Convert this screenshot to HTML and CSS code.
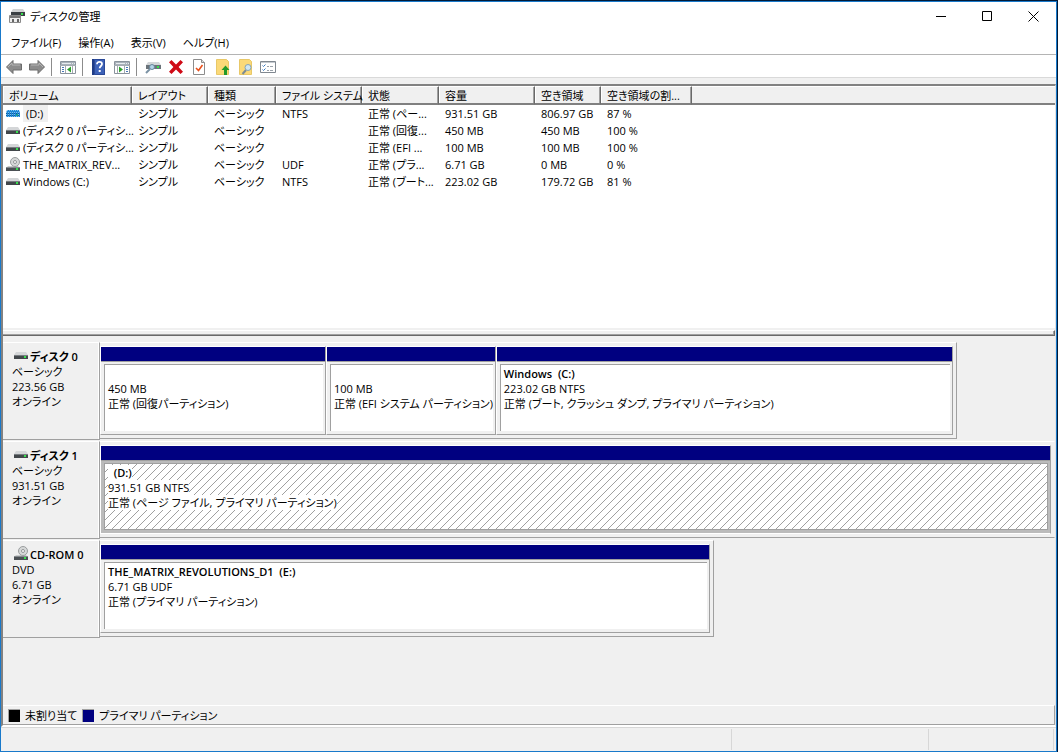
FILE: index.html
```html
<!DOCTYPE html>
<html lang="ja">
<head>
    <meta charset="UTF-8">
    <meta name="viewport" content="width=device-width, initial-scale=1.0">
    <title>ディスクの管理</title>
    <link rel="stylesheet" href="styles.css">
</head>
<body>
    <!-- Общие иконки дисков -->
    <svg class="sprite" aria-hidden="true">
        <symbol id="drive" viewBox="0 0 14 16">
            <path d="M2 4h10l2 3H0z" fill="#d4d6d8"/>
            <rect y="7" width="14" height="4" fill="#42474b"/>
            <rect y="7" width="14" height="1" fill="#777c80"/>
            <rect x="10" y="8" width="2" height="2" fill="#35e04c"/>
        </symbol>
        <symbol id="drive-selected" viewBox="0 0 14 16">
            <path d="M1 4h12l1 3v4H0V7z" fill="#1c86d6"/>
            <path d="M1 4.500h12M0 6.500h14M0 8.500h14M0 10.500h14" stroke="#7cc0f0" stroke-dasharray="1 1"/>
            <path d="M0 7.500h14M0 9.500h14" stroke="#0b5a9c" stroke-dasharray="1 1"/>
            <rect x="10" y="8" width="2" height="2" fill="#15a08c"/>
        </symbol>
        <symbol id="cdrom" viewBox="0 0 14 16">
            <path d="M2 9h10l2 2H0z" fill="#c9cbcc"/>
            <circle cx="9" cy="5" r="4.500" fill="#d6d8d8" stroke="#9a9d9e"/>
            <circle cx="9" cy="5" r="1.500" fill="#fff" stroke="#929596"/>
            <rect y="10" width="14" height="4" fill="#4b5054"/>
            <rect y="10" width="14" height="1" fill="#868b8e"/>
            <rect x="10" y="11" width="2" height="2" fill="#35e04c"/>
        </symbol>
    </svg>

    <div class="window">
        <header class="titlebar">
            <svg class="app-icon" width="16" height="16" viewBox="0 0 16 16">
                <path d="M4 1h10l2 3H2z" fill="#d0d2d3"/>
                <rect x="2" y="4" width="14" height="4" fill="#3b4044"/>
                <rect x="12" y="5" width="2" height="2" fill="#35e04c"/>
                <path d="M.500 7.500h11v7H.500z" fill="#eee" stroke="#8a8a8a"/>
                <path d="M1 8h10v2H1z" fill="#777"/>
                <path d="M3 11h2v3H3zM8 11h2v3H8z" fill="#666"/>
            </svg>
            <h1>ディスクの管理</h1>
            <div class="window-buttons">
                <button type="button" aria-label="最小化"><svg width="11" height="11" viewBox="0 0 11 11"><path d="M0 5.500h10" stroke="#000"/></svg></button>
                <button type="button" aria-label="最大化"><svg width="11" height="11" viewBox="0 0 11 11"><path d="M.500.500h9v9h-9z" fill="none" stroke="#000"/></svg></button>
                <button type="button" aria-label="閉じる"><svg width="11" height="11" viewBox="0 0 11 11"><path d="M.500.500l10 10M10.500.500l-10 10" stroke="#000"/></svg></button>
            </div>
        </header>

        <nav class="menubar">
            <button type="button">ファイル(F)</button>
            <button type="button">操作(A)</button>
            <button type="button">表示(V)</button>
            <button type="button">ヘルプ(H)</button>
        </nav>

        <div class="toolbar">
            <button type="button" aria-label="戻る">
                <svg width="16" height="16" viewBox="0 0 16 16"><path d="M.500 8L7 1.500V5h8.500v6H7v3.500z" fill="#8c8c8c" stroke="#6c6c6c"/><path d="M2 8l4-4v2h8" fill="none" stroke="#b5b5b5"/></svg>
            </button>
            <button type="button" aria-label="進む">
                <svg width="16" height="16" viewBox="0 0 16 16"><path d="M15.500 8L9 1.500V5H.500v6H9v3.500z" fill="#8c8c8c" stroke="#6c6c6c"/><path d="M14 8l-4-4v2H2" fill="none" stroke="#b5b5b5"/></svg>
            </button>
            <span class="separator"></span>
            <button type="button" aria-label="コンソール ツリー">
                <svg width="16" height="16" viewBox="0 0 16 16"><path d="M.500 2.500h15v12H.500z" fill="#fff" stroke="#8a939c"/><path d="M1 3h14v3H1z" fill="#aab2bb"/><path d="M2 4.500h9M12 4.500h1M14 4.500h1" stroke="#e8ecef"/><path d="M0 6.500h16M5.500 7v7M12.500 7v7" stroke="#a4abb2"/><path d="M2 8.500h2M2 10.500h2M2 12.500h2" stroke="#4878b8"/><path d="M11 7.500v6L7 10.500z" fill="#2ca02c"/></svg>
            </button>
            <span class="separator"></span>
            <button type="button" aria-label="ヘルプ">
                <svg width="16" height="16" viewBox="0 0 16 16"><path d="M1 0h13v16H1z" fill="#3d62b8"/><path d="M1 0h2v16H1z" fill="#1f3c86"/><path d="M3.500.500h10v15h-10z" fill="none" stroke="#2a4896"/><path d="M6 5.200C6 3.500 7.200 2.800 8.500 2.800S11 3.600 11 5c0 2-2.300 2-2.300 4.300" fill="none" stroke="#fff" stroke-width="1.800"/><path d="M7.700 11h2v2h-2z" fill="#fff"/></svg>
            </button>
            <button type="button" aria-label="操作ウィンドウ">
                <svg width="16" height="16" viewBox="0 0 16 16"><path d="M.500 2.500h15v12H.500z" fill="#fff" stroke="#8a939c"/><path d="M1 3h14v3H1z" fill="#aab2bb"/><path d="M2 4.500h9M12 4.500h1M14 4.500h1" stroke="#e8ecef"/><path d="M0 6.500h16M3.500 7v7M10.500 7v7" stroke="#a4abb2"/><path d="M12 8.500h2M12 10.500h2M12 12.500h2" stroke="#4878b8"/><path d="M5 7.500v6l4-3z" fill="#2ca02c"/></svg>
            </button>
            <span class="separator"></span>
            <button type="button" aria-label="ディスクの再スキャン">
                <svg width="16" height="16" viewBox="0 0 16 16"><path d="M3 3h11l2 3H1z" fill="#d3d6d8"/><path d="M1 6h15v4H1z" fill="#6b7379"/><path d="M12 7h2v2h-2z" fill="#35e04c"/><path d="M5 10l-4 4" stroke="#7b92a4" stroke-width="2"/><circle cx="7" cy="8" r="2.500" fill="#b4d4e8" stroke="#68889c"/></svg>
            </button>
            <button type="button" aria-label="削除">
                <svg width="16" height="16" viewBox="0 0 16 16"><path d="M3.500 1L8 5.500 12.500 1 15 3.300 10.600 8l4.400 4.700-2.500 2.300L8 10.500 3.500 15 1 12.700 5.400 8 1 3.300z" fill="#cf0a16"/></svg>
            </button>
            <button type="button" aria-label="プロパティ">
                <svg width="16" height="16" viewBox="0 0 16 16"><path d="M2.500.500h8l3 3v12h-11z" fill="#fff" stroke="#8c8c8c"/><path d="M10.500.500v3h3" fill="#ddd" stroke="#8c8c8c"/><path d="M5 9l2.500 2.500L11.500 6" fill="none" stroke="#e8501c" stroke-width="1.600"/></svg>
            </button>
            <button type="button" aria-label="上へ">
                <svg width="16" height="16" viewBox="0 0 16 16"><path d="M2.500.500h10l2 2v13h-12z" fill="#fbd978" stroke="#e8c868"/><path d="M11.500 6.500l4 4.500h-2.500v5h-3v-5H7.500z" fill="#239a2a"/></svg>
            </button>
            <button type="button" aria-label="検索">
                <svg width="16" height="16" viewBox="0 0 16 16"><path d="M2.500.500h10l2 2v13h-12z" fill="#fbd978" stroke="#e8c868"/><path d="M9 11l-3.500 4" stroke="#7d8c94" stroke-width="2"/><circle cx="11" cy="8.500" r="3" fill="#cfe6f4" stroke="#86a4b4"/></svg>
            </button>
            <button type="button" aria-label="一覧">
                <svg width="16" height="16" viewBox="0 0 16 16"><path d="M.500 2.500h15v11H.500z" fill="#fff" stroke="#808890"/><path d="M1 3.500h14" stroke="#c5cad0"/><path d="M2.500 6.500l1 1 2-2M2.500 10.500l1 1 2-2" fill="none" stroke="#3878c0"/><path d="M7 7.500h2M10 7.500h3M7 11.500h2M10 11.500h3" stroke="#9aa2aa"/></svg>
            </button>
        </div>

        <main class="content">
            <div class="volumes">
                <table class="volume-table">
                    <colgroup>
                        <col class="col-volume"><col class="col-layout"><col class="col-type"><col class="col-fs"><col class="col-status"><col class="col-size"><col class="col-free"><col class="col-percent"><col>
                    </colgroup>
                    <thead>
                        <tr><th>ボリューム</th><th>レイアウト</th><th>種類</th><th>ファイル システム</th><th>状態</th><th>容量</th><th>空き領域</th><th>空き領域の割...</th><td></td></tr>
                    </thead>
                    <tbody>
                        <tr><td><svg class="icon"><use href="#drive-selected"/></svg><span class="selected">(D:)</span></td><td>シンプル</td><td>ベーシック</td><td>NTFS</td><td>正常 (ペー...</td><td>931.51 GB</td><td>806.97 GB</td><td>87 %</td><td></td></tr>
                        <tr><td><svg class="icon"><use href="#drive"/></svg>(ディスク 0 パーティシ...</td><td>シンプル</td><td>ベーシック</td><td></td><td>正常 (回復...</td><td>450 MB</td><td>450 MB</td><td>100 %</td><td></td></tr>
                        <tr><td><svg class="icon"><use href="#drive"/></svg>(ディスク 0 パーティシ...</td><td>シンプル</td><td>ベーシック</td><td></td><td>正常 (EFI ...</td><td>100 MB</td><td>100 MB</td><td>100 %</td><td></td></tr>
                        <tr><td><svg class="icon"><use href="#cdrom"/></svg>THE_MATRIX_REV...</td><td>シンプル</td><td>ベーシック</td><td>UDF</td><td>正常 (プラ...</td><td>6.71 GB</td><td>0 MB</td><td>0 %</td><td></td></tr>
                        <tr><td><svg class="icon"><use href="#drive"/></svg>Windows (C:)</td><td>シンプル</td><td>ベーシック</td><td>NTFS</td><td>正常 (ブート...</td><td>223.02 GB</td><td>179.72 GB</td><td>81 %</td><td></td></tr>
                    </tbody>
                </table>
            </div>

            <div class="splitter"></div>

            <div class="graph">
                <section class="disk">
                    <div class="disk-label">
                        <h2><svg class="icon"><use href="#drive"/></svg>ディスク 0</h2>
                        <p>ベーシック</p>
                        <p>223.56 GB</p>
                        <p>オンライン</p>
                    </div>
                    <div class="disk-area">
                        <div class="partitions" style="width: 89.7%">
                            <div class="partition" style="flex-grow: 219">
                                <div class="partition-body">
                                    <h3>&nbsp;</h3>
                                    <p>450 MB</p>
                                    <p>正常 (回復パーティション)</p>
                                </div>
                            </div>
                            <div class="partition" style="flex-grow: 163">
                                <div class="partition-body">
                                    <h3>&nbsp;</h3>
                                    <p>100 MB</p>
                                    <p>正常 (EFI システム パーティション)</p>
                                </div>
                            </div>
                            <div class="partition" style="flex-grow: 450">
                                <div class="partition-body">
                                    <h3>Windows&nbsp; (C:)</h3>
                                    <p>223.02 GB NTFS</p>
                                    <p>正常 (ブート, クラッシュ ダンプ, プライマリ パーティション)</p>
                                </div>
                            </div>
                        </div>
                    </div>
                </section>

                <section class="disk">
                    <div class="disk-label">
                        <h2><svg class="icon"><use href="#drive"/></svg>ディスク 1</h2>
                        <p>ベーシック</p>
                        <p>931.51 GB</p>
                        <p>オンライン</p>
                    </div>
                    <div class="disk-area">
                        <div class="partitions full" style="width: 100%">
                            <div class="partition active">
                                <div class="partition-body">
                                    <h3>&nbsp; (D:)</h3>
                                    <p>931.51 GB NTFS</p>
                                    <p>正常 (ページ ファイル, プライマリ パーティション)</p>
                                </div>
                            </div>
                        </div>
                    </div>
                </section>

                <section class="disk">
                    <div class="disk-label">
                        <h2><svg class="icon"><use href="#cdrom"/></svg>CD-ROM 0</h2>
                        <p>DVD</p>
                        <p>6.71 GB</p>
                        <p>オンライン</p>
                    </div>
                    <div class="disk-area">
                        <div class="partitions" style="width: 64.3%">
                            <div class="partition">
                                <div class="partition-body">
                                    <h3>THE_MATRIX_REVOLUTIONS_D1&nbsp; (E:)</h3>
                                    <p>6.71 GB UDF</p>
                                    <p>正常 (プライマリ パーティション)</p>
                                </div>
                            </div>
                        </div>
                    </div>
                </section>

                <div class="legend">
                    <span class="swatch unallocated"></span><span>未割り当て</span>
                    <span class="swatch primary"></span><span>プライマリ パーティション</span>
                </div>
            </div>
        </main>

        <footer class="statusbar">
            <span class="status-main"></span>
            <span class="status-wide"></span>
            <span class="status-small"></span>
        </footer>
    </div>
</body>
</html>
```
FILE: styles.css
```css
* {
    box-sizing: border-box;
}

body {
    margin: 0;
    height: 100vh;
    padding: 1px 1px 0 0;
    font-family: "Open Sans", "Noto Sans CJK JP", sans-serif;
    font-size: 11px;
    line-height: 15px;
    font-feature-settings: "palt";
    color: #000;
    background: #001a38;
}

h1, h2, h3, p {
    margin: 0;
    font-size: inherit;
    font-weight: normal;
}

button {
    font: inherit;
    font-feature-settings: inherit;
    color: inherit;
    background: none;
    border: none;
    padding: 0;
}

.sprite {
    display: none;
}

.icon {
    width: 14px;
    height: 16px;
    flex: none;
}

.window {
    display: flex;
    flex-direction: column;
    height: 100%;
    border: 1px solid #1979ca;
    background: #f0f0f0;
}

/* Заголовок окна */
.titlebar {
    display: flex;
    align-items: center;
    height: 28px;
    flex: none;
    padding-left: 8px;
    background: #fff;
}

.titlebar h1 {
    margin-left: 5px;
}

.window-buttons {
    display: flex;
    margin-left: auto;
}

.window-buttons button {
    display: flex;
    justify-content: center;
    align-items: center;
    width: 46px;
    height: 28px;
}

.menubar {
    display: flex;
    gap: 17px;
    height: 24px;
    flex: none;
    padding-left: 10px;
    background: #fff;
}

.toolbar {
    display: flex;
    height: 24px;
    flex: none;
    padding-left: 1px;
    margin-bottom: 6px;
    background: #fff;
    border-top: 1px solid #b4b4b4;
    border-bottom: 1px solid #d9d9d9;
}

.toolbar button {
    display: flex;
    justify-content: center;
    align-items: center;
    width: 23px;
    padding-top: 2px;
}

.separator {
    width: 1px;
    margin: 3px 4px 1px 3px;
    background: #8c8c8c;
}

.content {
    display: flex;
    flex-direction: column;
    flex: 1;
    min-height: 0;
    border-style: solid;
    border-width: 2px 1px 2px 2px;
    border-color: #828282 #e3e3e3 #fff #828282;
}

/* Список томов */
.volumes {
    flex: 245 1 0;
    background: #fff;
    border-bottom: 2px solid #f0f0f0;
    overflow: hidden;
}

.volume-table {
    width: 100%;
    table-layout: fixed;
    border-collapse: separate;
    border-spacing: 0;
}

.col-volume { width: 129px; }
.col-layout { width: 76px; }
.col-type { width: 68px; }
.col-fs { width: 86px; }
.col-status { width: 77px; }
.col-size { width: 96px; }
.col-free { width: 66px; }
.col-percent { width: 91px; }

.volume-table th,
.volume-table td {
    height: 17px;
    padding: 0 0 0 6px;
    text-align: left;
    font-weight: normal;
    white-space: nowrap;
}

.volume-table thead th,
.volume-table thead td {
    height: 19px;
    background: #f0f0f0;
    border-top: 1px solid #fff;
    border-bottom: 2px solid #808080;
}

.volume-table thead th {
    border-right: 1px solid #696969;
    box-shadow: inset 1px 0 #fff, inset -1px 0 #a0a0a0;
}

.volume-table tbody td:first-child {
    display: flex;
    align-items: center;
    gap: 3px;
    padding-left: 3px;
}

.selected {
    padding: 0 5px 0 3px;
    line-height: 17px;
    background: #f0f0f0;
}

.splitter {
    height: 6px;
    flex: none;
    border-top: 1px solid #fff;
    border-bottom: 1px solid #696969;
    border-right: 1px solid #696969;
    box-shadow: inset -1px -1px #a0a0a0;
}

/* Графическое представление дисков */
.graph {
    display: flex;
    flex-direction: column;
    gap: 1px;
    flex: 388 1 0;
    padding-top: 6px;
}

.disk {
    display: flex;
    align-items: flex-start;
}

.disk-label {
    width: 97px;
    height: 98px;
    flex: none;
    padding: 6px 0 0 9px;
    border: 1px solid #a0a0a0;
    border-top-color: #fff;
    border-left: none;
    box-shadow: inset -1px 0 #fff;
}

.disk-label h2 {
    display: flex;
    align-items: center;
    gap: 2px;
    height: 15px;
    padding-left: 2px;
    font-weight: 600;
}

.disk-area {
    flex: 1;
    min-width: 0;
}

.partitions {
    display: flex;
    height: 97px;
    padding: 3px 3px 3px 0;
    border: 1px solid #a0a0a0;
    border-top-color: #fff;
    border-left: none;
}

.partitions.full {
    border-right-color: #f0f0f0;
}

.partition {
    display: flex;
    flex-direction: column;
    flex: 1 1 0;
    min-width: 0;
    padding: 0 2px 3px 3px;
    border: 1px solid #a0a0a0;
    border-top-color: #fff;
    border-left-color: #fff;
}

.partition::before {
    content: '';
    height: 14px;
    flex: none;
    margin: 0 -2px 2px -3px;
    background: #000080;
    border-bottom: 1px solid #a0a0a0;
}

.partition-body {
    flex: 1;
    padding: 1px 0 0 3px;
    overflow: hidden;
    white-space: nowrap;
    background: #fff;
    border-top: 1px solid #a0a0a0;
    border-left: 1px solid #a0a0a0;
}

.partition-body h3 {
    font-weight: 600;
}

.partition.active {
    background: #bbb;
    border-bottom-color: #fff;
}

.active .partition-body {
    border: 1px solid #a0a0a0;
    background: #fff url("data:image/svg+xml,%3Csvg xmlns='http://www.w3.org/2000/svg' width='8' height='8' shape-rendering='crispEdges'%3E%3Cpath fill='%23a0a0a0' d='M0 7h1v1H0zM1 6h1v1H1zM2 5h1v1H2zM3 4h1v1H3zM4 3h1v1H4zM5 2h1v1H5zM6 1h1v1H6zM7 0h1v1H7z'/%3E%3C/svg%3E");
}

.active .partition-body h3,
.active .partition-body p {
    width: max-content;
    background: #fff;
}

.legend {
    display: flex;
    align-items: center;
    gap: 5px;
    height: 20px;
    margin-top: auto;
    padding-left: 5px;
    border-top: 1px solid #fff;
    border-right: 1px solid #a0a0a0;
    border-bottom: 1px solid #a0a0a0;
}

.swatch {
    width: 12px;
    height: 13px;
    border: 1px solid #a0a0a0;
    border-right: none;
    border-bottom: none;
}

.unallocated {
    background: #000;
}

.primary {
    background: #000080;
}

.statusbar {
    display: flex;
    height: 24px;
    flex: none;
    padding: 1px 2px 1px 0;
    border-top: 1px solid #d7d7d7;
}

.statusbar span {
    border-right: 1px solid #d7d7d7;
}

.status-main {
    flex: 1;
}

.status-wide {
    width: 197px;
}

.status-small {
    width: 125px;
}
```
